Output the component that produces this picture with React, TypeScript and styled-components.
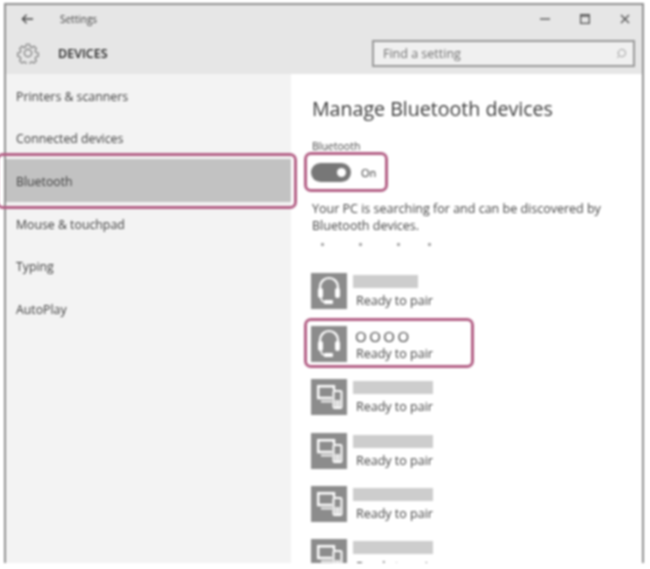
import React from 'react';
import styled, { createGlobalStyle } from 'styled-components';
import { Search } from 'lucide-react';

const GlobalStyle = createGlobalStyle`
  html, body {
    margin: 0;
    padding: 0;
    background: #fff;
    overflow: hidden;
  }
  body {
    font-family: "Open Sans", "Liberation Sans", sans-serif;
  }
`;

const Page = styled.div`
  width: 650px;
  height: 569px;
  padding: 3px 6px 6px 4px;
  box-sizing: border-box;
  overflow: hidden;
`;

const Window = styled.div`
  height: 100%;
  box-sizing: border-box;
  border: 2px solid #8f8f8f;
  border-bottom: none;
  display: flex;
  flex-direction: column;
  filter: blur(0.8px);
`;

const TitleArea = styled.header`
  height: 69px;
  flex: none;
  background: #e6e6e6;
  display: flex;
  flex-direction: column;
`;

const TitleBar = styled.div`
  height: 27px;
  display: flex;
  align-items: center;
  padding-left: 15px;
  color: #555;
`;

const WindowTitle = styled.span`
  font-size: 10px;
  margin-left: 26px;
  color: #444;
`;

const WindowButtons = styled.div`
  margin-left: auto;
  display: flex;
  align-items: center;
  gap: 30px;
  padding-right: 12px;
`;

const HeaderRow = styled.div`
  flex: 1;
  display: flex;
  align-items: center;
  padding: 0 7px 0 11px;
`;

const PageName = styled.span`
  font-size: 12.5px;
  font-weight: 600;
  margin-left: 19px;
  color: #222;
`;

const SearchBox = styled.div`
  margin-left: auto;
  width: 263px;
  height: 27px;
  box-sizing: border-box;
  border: 2px solid #999;
  background: #f0f0f0;
  display: flex;
  align-items: center;
  justify-content: space-between;
  padding: 0 6px 0 9px;
  font-size: 12.5px;
  color: #707070;
`;

const Body = styled.div`
  flex: 1;
  min-height: 0;
  display: flex;
`;

const Sidebar = styled.nav`
  width: 285px;
  flex: none;
  background: #f3f3f3;
`;

const NavItem = styled.div<{ $active?: boolean }>`
  position: relative;
  height: 42.6px;
  display: flex;
  align-items: center;
  padding: 2px 0 0 10px;
  box-sizing: border-box;
  font-size: 12.3px;
  color: #3d3d3d;
  background: ${(p) => (p.$active ? '#c2c2c2' : 'transparent')};
`;

const Callout = styled.div`
  position: absolute;
  border: 3px solid #b35f85;
  border-radius: 7px;
  box-sizing: border-box;
  pointer-events: none;
`;

const NavCallout = styled(Callout)`
  left: -10px;
  right: -6px;
  top: -6px;
  bottom: -7px;
`;

const Content = styled.main`
  flex: 1;
  min-width: 0;
  overflow: hidden;
  padding: 0 0 0 21px;
  background: #fff;
`;

const Heading = styled.h1`
  margin: 22px 0 0;
  font-size: 19.6px;
  line-height: 26px;
  font-weight: 400;
  color: #3a3a3a;
`;

const SwitchLabel = styled.div`
  margin-top: 17px;
  font-size: 10.5px;
  line-height: 14px;
  color: #444;
`;

const SwitchRow = styled.div`
  position: relative;
  display: flex;
  align-items: center;
  gap: 10px;
  height: 20px;
  margin-top: 9px;
  font-size: 11px;
  color: #333;
`;

const SwitchCallout = styled(Callout)`
  left: -8px;
  top: -10px;
  width: 84px;
  height: 40px;
`;

const SwitchTrack = styled.div`
  width: 40px;
  height: 19px;
  margin-left: -1px;
  border-radius: 9.5px;
  background: #777;
  display: flex;
  align-items: center;
  justify-content: flex-end;
  padding-right: 5px;
  box-sizing: border-box;
`;

const SwitchKnob = styled.div`
  width: 9px;
  height: 9px;
  border-radius: 50%;
  background: #fff;
`;

const Description = styled.p`
  margin: 18px 0 0;
  font-size: 12.5px;
  line-height: 17px;
  color: #444;
`;

const Dots = styled.div`
  display: flex;
  gap: 35px;
  margin: 9px 0 0 9px;
`;

const Dot = styled.span`
  width: 3px;
  height: 3px;
  background: #aaa;

  &:last-child {
    margin-left: -7px;
  }
`;

const DeviceList = styled.div`
  margin: 27px 0 0 -1px;
  display: flex;
  flex-direction: column;
  gap: 17.2px;
`;

const DeviceRow = styled.div`
  position: relative;
  display: flex;
  gap: 8px;
  height: 36px;
`;

const DeviceCallout = styled(Callout)`
  left: -7px;
  top: -8px;
  width: 170px;
  height: 50px;
`;

const Tile = styled.div`
  width: 36px;
  height: 36px;
  flex: none;
  background: #8c8c8c;
  display: flex;
`;

const DeviceText = styled.div`
  display: flex;
  flex-direction: column;
  justify-content: flex-end;
  height: 36px;
`;

const NameBar = styled.div<{ $width: number }>`
  width: ${(p) => p.$width}px;
  height: 13px;
  margin: 0 0 4px -2px;
  background: #cdcdcd;
`;

const DeviceName = styled.div`
  height: 17px;
  font-size: 15px;
  line-height: 17px;
  letter-spacing: 2.5px;
  color: #444;
`;

const DeviceStatus = styled.div`
  font-size: 12.5px;
  line-height: 17px;
  margin-left: 1px;
  color: #444;
`;

const BackIcon = () => (
  <svg width="13" height="12" viewBox="0 0 14 12" fill="none" stroke="#444" strokeWidth="1.4">
    <path d="M13 6H1.5M6 1.5 1.5 6 6 10.5" />
  </svg>
);

const GearIcon = () => (
  <svg width="22" height="22" viewBox="0 0 24 24" fill="none" stroke="#777" strokeWidth="1.3">
    <circle cx="12" cy="12" r="4" />
    <path d="M10 1.5h4l.7 3 2.1.9 2.6-1.6 2.8 2.8-1.6 2.6.9 2.1 3 .7v4l-3 .7-.9 2.1 1.6 2.6-2.8 2.8-2.6-1.6-2.1.9-.7 3h-4l-.7-3-2.1-.9-2.6 1.6-2.8-2.8 1.6-2.6-.9-2.1-3-.7v-4l3-.7.9-2.1-1.6-2.6 2.8-2.8L7.2 5.4l2.1-.9z" transform="translate(1.2 1.2) scale(0.9)" />
  </svg>
);

const MinimizeIcon = () => (
  <svg width="10" height="10" viewBox="0 0 10 10" stroke="#555" strokeWidth="1.4">
    <path d="M0 5h10" />
  </svg>
);

const MaximizeIcon = () => (
  <svg width="10" height="10" viewBox="0 0 10 10" fill="none" stroke="#555" strokeWidth="1.3">
    <path d="M.7.7h8.6v8.6H.7zM.7 2.2h8.6" />
  </svg>
);

const CloseIcon = () => (
  <svg width="10" height="10" viewBox="0 0 10 10" stroke="#555" strokeWidth="1.4">
    <path d="M1 1l8 8M9 1l-8 8" />
  </svg>
);

const HeadsetIcon = () => (
  <svg width="36" height="36" viewBox="0 0 36 36" fill="none" stroke="#fff" strokeWidth="2.2">
    <path d="M9 20v-6a9 9 0 0 1 18 0v6" />
    <rect x="7" y="15" width="5" height="10" rx="2.2" fill="#fff" stroke="none" />
    <rect x="24" y="15" width="5" height="10" rx="2.2" fill="#fff" stroke="none" />
    <path d="M10 24c0 3 1.500 5 4 5" strokeWidth="1.500" />
    <rect x="13" y="27" width="9" height="4" rx="1" fill="#fff" stroke="none" />
  </svg>
);

const ComputerPhoneIcon = () => (
  <svg width="36" height="36" viewBox="0 0 36 36" fill="none" stroke="#fff" strokeWidth="2.4">
    <path d="M21 19H7.200V7.200H23V11" />
    <path d="M10 22.500h11" strokeWidth="1.800" />
    <rect x="22.500" y="12" width="8" height="17" rx="1" strokeWidth="2" />
    <rect x="24" y="21" width="5" height="7" fill="#fff" stroke="none" opacity="0.75" />
  </svg>
);

const navItems = ['Printers & scanners', 'Connected devices', 'Bluetooth', 'Mouse & touchpad', 'Typing', 'AutoPlay'];

const devices = [
  { kind: 'headset', barWidth: 65 },
  { kind: 'headset', name: 'OOOO' },
  { kind: 'computer', barWidth: 80 },
  { kind: 'computer', barWidth: 80 },
  { kind: 'computer', barWidth: 80 },
  { kind: 'computer', barWidth: 80 },
];

const App: React.FC = () => {
  return (
    <Page>
      <GlobalStyle />
      <Window>
        <TitleArea>
          <TitleBar>
            <BackIcon />
            <WindowTitle>Settings</WindowTitle>
            <WindowButtons>
              <MinimizeIcon />
              <MaximizeIcon />
              <CloseIcon />
            </WindowButtons>
          </TitleBar>
          <HeaderRow>
            <GearIcon />
            <PageName>DEVICES</PageName>
            <SearchBox>
              Find a setting
              <Search size={11} color="#999" style={{ transform: 'scaleX(-1)' }} />
            </SearchBox>
          </HeaderRow>
        </TitleArea>
        <Body>
          <Sidebar>
            {navItems.map((item) => (
              <NavItem key={item} $active={item === 'Bluetooth'}>
                {item}
                {item === 'Bluetooth' && <NavCallout />}
              </NavItem>
            ))}
          </Sidebar>
          <Content>
            <Heading>Manage Bluetooth devices</Heading>
            <SwitchLabel>Bluetooth</SwitchLabel>
            <SwitchRow>
              <SwitchTrack>
                <SwitchKnob />
              </SwitchTrack>
              On
              <SwitchCallout />
            </SwitchRow>
            <Description>
              Your PC is searching for and can be discovered by
              <br />
              Bluetooth devices.
            </Description>
            <Dots>
              <Dot />
              <Dot />
              <Dot />
              <Dot />
            </Dots>
            <DeviceList>
              {devices.map((device, i) => (
                <DeviceRow key={i}>
                  <Tile>{device.kind === 'headset' ? <HeadsetIcon /> : <ComputerPhoneIcon />}</Tile>
                  <DeviceText>
                    {device.name ? <DeviceName>{device.name}</DeviceName> : <NameBar $width={device.barWidth ?? 0} />}
                    <DeviceStatus>Ready to pair</DeviceStatus>
                  </DeviceText>
                  {device.name && <DeviceCallout />}
                </DeviceRow>
              ))}
            </DeviceList>
          </Content>
        </Body>
      </Window>
    </Page>
  );
};

export default App;
